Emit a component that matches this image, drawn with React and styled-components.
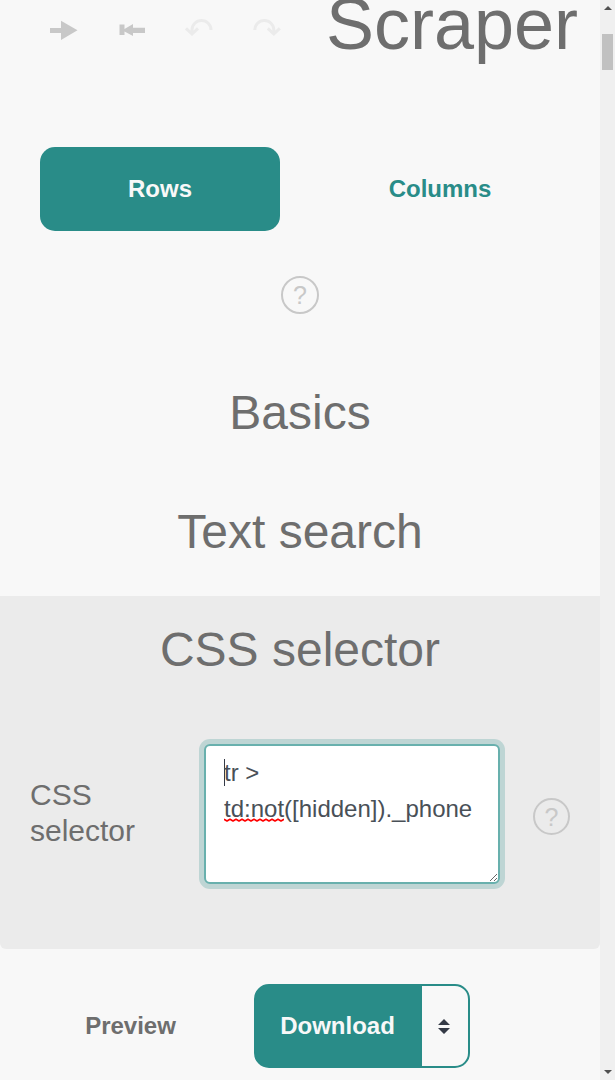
import React from "react";
import styled, { createGlobalStyle } from "styled-components";

const Global = createGlobalStyle`
  * { box-sizing: border-box; }
  html, body { margin: 0; overflow: hidden; background: #f8f8f8; }
  body { font-family: "Liberation Sans", Arial, sans-serif; color: #6e6e6e; }
  h1, h2, p { margin: 0; font-weight: 400; }
  button { font: inherit; color: inherit; border: 0; background: none; padding: 0; margin: 0; }
  svg { display: block; }
`;

const Window = styled.div`
  display: flex;
  width: 615px;
  height: 1080px;
  overflow: hidden;
`;

const Page = styled.main`
  display: flex;
  flex-direction: column;
  width: 600px;
  background: #f8f8f8;
`;

const Header = styled.header`
  display: flex;
  align-items: center;
  justify-content: space-between;
  height: 60px;
  padding: 0 22px 0 40px;
`;

const Tools = styled.div`
  display: flex;
  gap: 19.5px;
`;

const ToolButton = styled.button`
  display: grid;
  place-items: center;
  width: 48px;
  height: 48px;
  color: ${(p) => (p.disabled ? "#ebebeb" : "#c8c8c8")};
`;

const Title = styled.h1`
  font-size: 72px;
  line-height: 84px;
  padding-bottom: 12px;
`;

const Tabs = styled.nav`
  display: flex;
  gap: 40px;
  padding: 0 40px;
  margin-top: 87px;
`;

const Tab = styled.button`
  flex: 1;
  height: 84px;
  border-radius: 15px;
  font-size: 24px;
  font-weight: 700;
  color: ${(p) => (p.$active ? "#f8f8f8" : "#298c88")};
  background: ${(p) => (p.$active ? "#298c88" : "transparent")};
`;

const HelpRow = styled.div`
  display: flex;
  justify-content: center;
  margin: 45px 0 39px;
`;

const Help = styled.button`
  display: grid;
  place-items: center;
  width: ${(p) => p.$size || 38}px;
  height: ${(p) => p.$size || 38}px;
  border: 2px solid #c8c8c8;
  border-radius: 50%;
  font-size: 25px;
  line-height: 30px;
  color: #c8c8c8;
`;

const Heading = styled.h2`
  font-size: 48px;
  line-height: 119px;
  text-align: center;
`;

const Section = styled.section`
  height: 353px;
  margin-top: 5px;
  background: #ebebeb;
  border-radius: 0 0 6px 6px;

  ${Heading} { line-height: 107px; }
`;

const Field = styled.div`
  display: flex;
  align-items: center;
  margin-top: 41px;
  padding: 0 30px;
`;

const Label = styled.label`
  width: 174px;
  padding-bottom: 3px;
  font-size: 30px;
  line-height: 36px;
`;

const Editor = styled.div`
  width: 296px;
  height: 140px;
  padding: 9px 18px;
  border: 2px solid #68b0ad;
  border-radius: 6px;
  box-shadow: 0 0 0 5px #bed5d4;
  background: #fff;
  color: #495057;
  font-size: 24px;
  line-height: 36px;
  resize: both;
  overflow: hidden;
`;

const Caret = styled.span`
  display: inline-block;
  width: 1px;
  height: 27px;
  margin-right: -1px;
  vertical-align: -5px;
  background: #343a46;
`;

const Misspelled = styled.span`
  position: relative;

  svg {
    position: absolute;
    left: 0;
    bottom: 0;
  }
`;

const FieldHelp = styled.div`
  margin: 5px 0 0 33px;
`;

const Footer = styled.footer`
  display: flex;
  align-items: center;
  margin-top: 35px;
  padding-left: 40px;
  font-size: 24px;
  font-weight: 700;
`;

const Preview = styled.button`
  width: 181px;
  height: 84px;
`;

const SplitButton = styled.div`
  display: flex;
  width: 216px;
  height: 84px;
  margin-left: 33px;
  border: 2px solid #298c88;
  border-radius: 15px;
  background: linear-gradient(to right, #298c88 166px, #f8f8f8 166px);
`;

const Download = styled.button`
  width: 166px;
  padding-right: 3px;
  color: #f8f8f8;
`;

const Format = styled.button`
  flex: 1;
  display: grid;
  place-items: center;
  padding-right: 2px;
  color: #343a46;
`;

const Scrollbar = styled.div`
  display: flex;
  flex-direction: column;
  align-items: center;
  width: 15px;
  background: #f0f0f0;
  color: #505050;
`;

const Thumb = styled.div`
  width: 11px;
  height: 36px;
  margin: 18px 0 auto;
  background: #c1c1c1;
`;

const ArrowBox = styled.div`
  display: grid;
  place-items: center;
  width: 15px;
  height: 16px;
`;

export default function App() {
  return (
    <>
      <Global />
      <Window>
        <Page>
          <Header>
            <Tools>
              <ToolButton aria-label="Forward">
                <svg width="28" height="20" viewBox="0 0 28 20" fill="currentColor">
                  <path d="M0 8h11V.7l16.500 9.600L11 20v-7H0z" />
                </svg>
              </ToolButton>
              <ToolButton aria-label="Back to start">
                <svg width="26" height="14" viewBox="0 0 26 14" fill="currentColor">
                  <path d="M.5 1.500h5v4.500L14 1v3.700h12v5.300H14v3L5.500 8.500V12h-5z" />
                </svg>
              </ToolButton>
              <ToolButton disabled aria-label="Undo">
                <svg width="28" height="22" viewBox="0 0 28 22" fill="none" stroke="currentColor" strokeWidth="3">
                  <path d="M26 11A9.500 9.500 0 0 0 7 11V15M1 9.300l6 5.700 6-5.700" />
                </svg>
              </ToolButton>
              <ToolButton disabled aria-label="Redo">
                <svg width="28" height="22" viewBox="0 0 28 22" fill="none" stroke="currentColor" strokeWidth="3">
                  <path d="M1.800 11A9.500 9.500 0 0 1 20.800 11V15M26.800 9.300l-6 5.700-6-5.700" />
                </svg>
              </ToolButton>
            </Tools>
            <Title>Scraper</Title>
          </Header>
          <Tabs>
            <Tab $active>Rows</Tab>
            <Tab>Columns</Tab>
          </Tabs>
          <HelpRow>
            <Help>?</Help>
          </HelpRow>
          <Heading>Basics</Heading>
          <Heading>Text search</Heading>
          <Section>
            <Heading>CSS selector</Heading>
            <Field>
              <Label>CSS<br />selector</Label>
              <Editor role="textbox">
                <Caret />tr &gt;<br />
                <Misspelled>
                  td:not
                  <svg width="60" height="4" viewBox="0 0 60 4" fill="none" stroke="#f00" strokeWidth="1.6">
                    <path d="M0 1.200l3 1.800 3-1.800 3 1.800 3-1.800 3 1.800 3-1.800 3 1.800 3-1.800 3 1.800 3-1.800 3 1.800 3-1.800 3 1.800 3-1.800 3 1.800 3-1.800 3 1.800 3-1.800 3 1.800 3-1.800" strokeLinejoin="round" />
                  </svg>
                </Misspelled>([hidden])._phone
              </Editor>
              <FieldHelp>
                <Help $size={37}>?</Help>
              </FieldHelp>
            </Field>
          </Section>
          <Footer>
            <Preview>Preview</Preview>
            <SplitButton>
              <Download>Download</Download>
              <Format aria-label="Choose format">
                <svg width="12" height="15" viewBox="0 0 12 15" fill="currentColor">
                  <path d="M6 0l6 6H0zM0 9h12l-6 6z" />
                </svg>
              </Format>
            </SplitButton>
          </Footer>
        </Page>
        <Scrollbar>
          <ArrowBox>
            <svg width="8" height="4" viewBox="0 0 8 4" fill="currentColor"><path d="M4 0l4 4H0z" /></svg>
          </ArrowBox>
          <Thumb />
          <ArrowBox>
            <svg width="8" height="4" viewBox="0 0 8 4" fill="currentColor"><path d="M4 4L0 0h8z" /></svg>
          </ArrowBox>
        </Scrollbar>
      </Window>
    </>
  );
}
